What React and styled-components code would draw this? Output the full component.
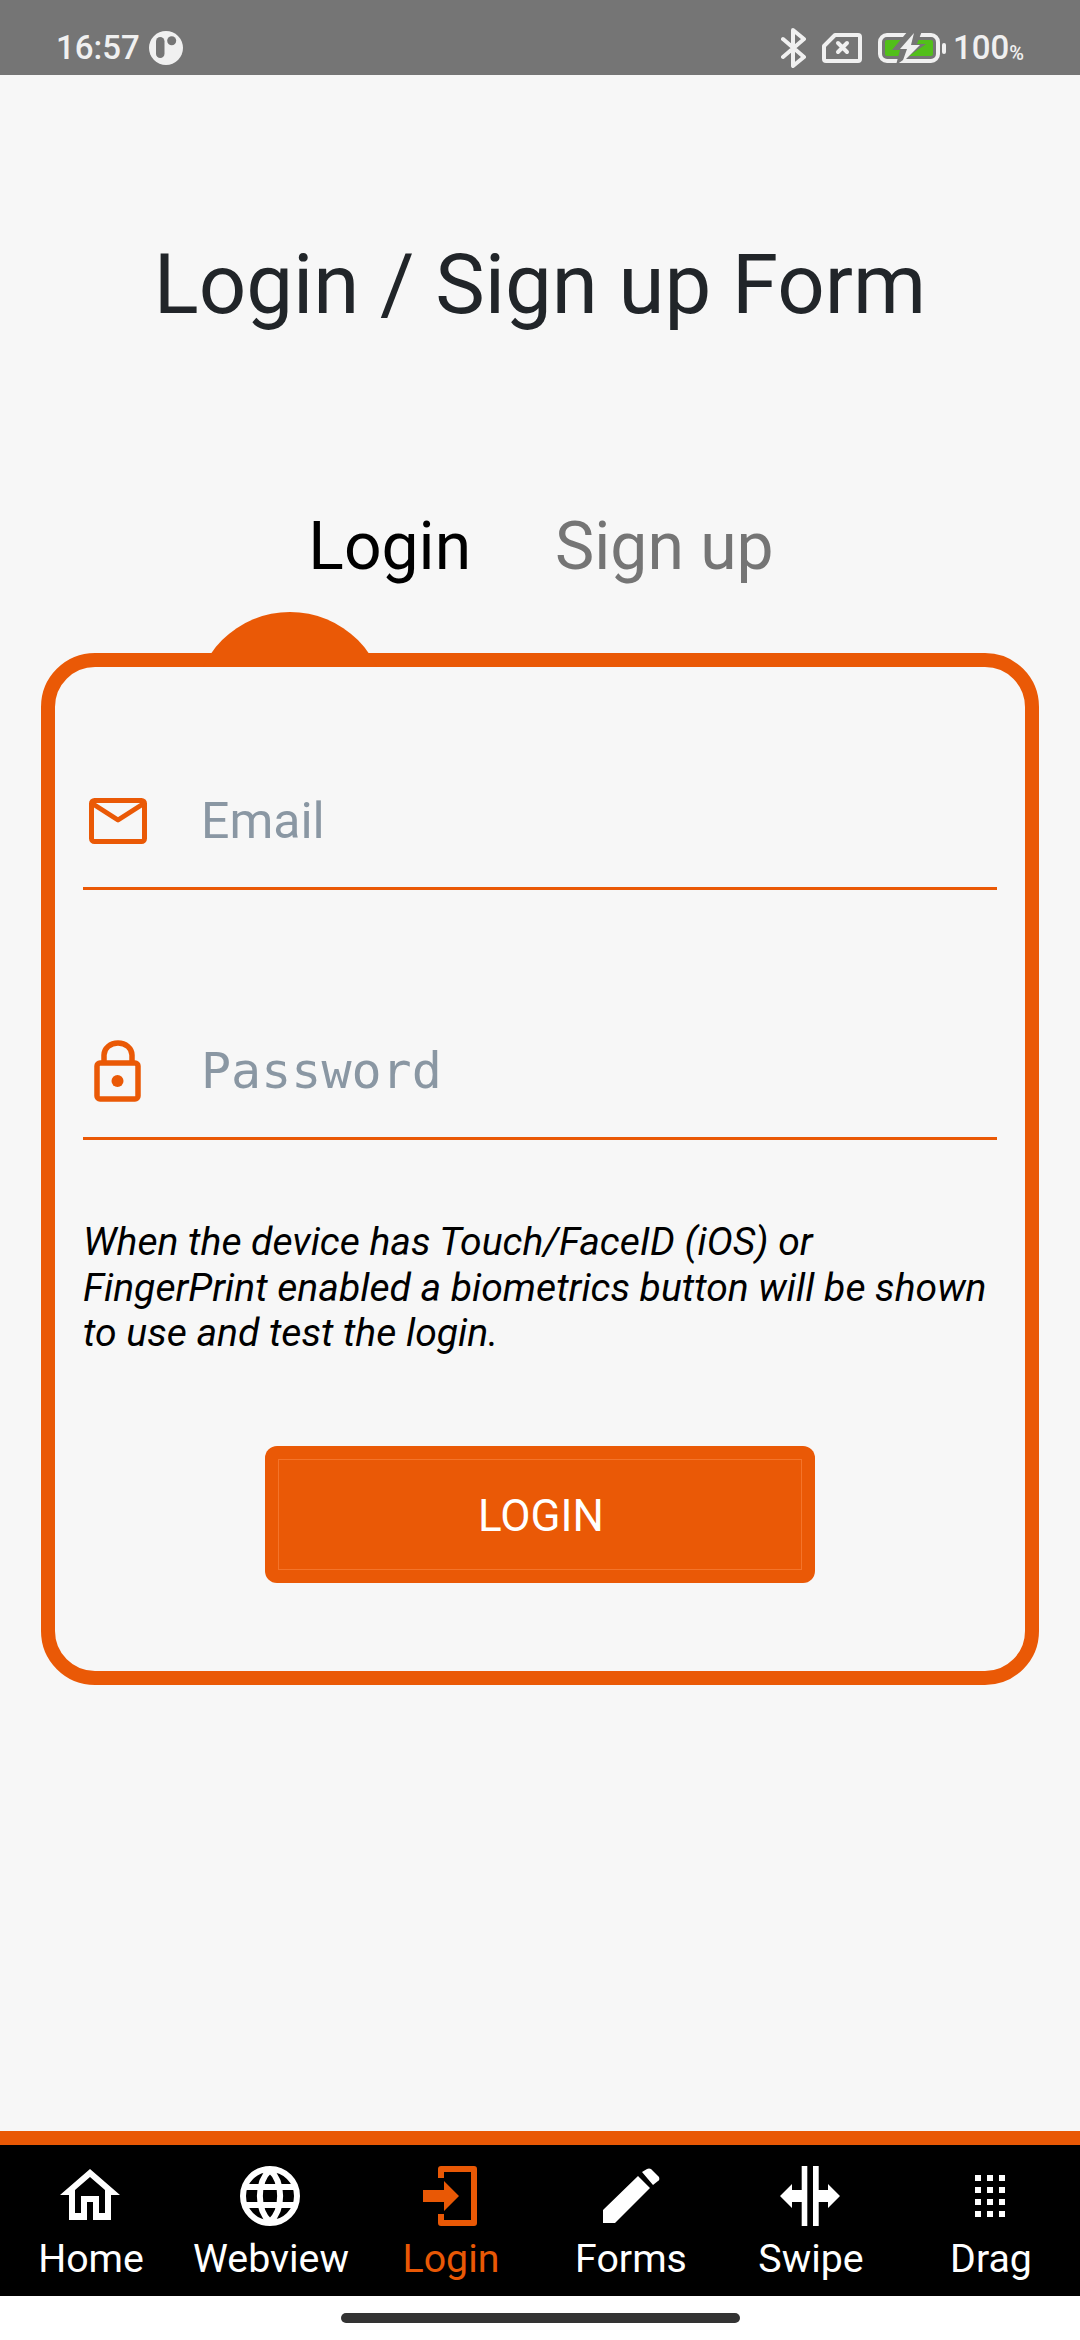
import React from "react";
import styled, { createGlobalStyle } from "styled-components";

const ORANGE = "#ea5906";

const Global = createGlobalStyle`
  html, body { margin: 0; padding: 0; background: #fff; }
  body { font-family: Roboto, "Noto Sans", sans-serif; }
`;

const Screen = styled.div`
  width: 1080px;
  height: 2340px;
  display: flex;
  flex-direction: column;
  overflow: hidden;
  background: #f7f7f7;
`;

const StatusBar = styled.div`
  height: 75px;
  flex: none;
  background: #757575;
  display: flex;
  align-items: center;
  justify-content: space-between;
  padding: 20px 56px 0 56px;
  color: #f0f0f0;
  font-size: 33px;
  font-weight: 500;
  box-sizing: border-box;
`;

const StatusGroup = styled.div`
  display: flex;
  align-items: center;
`;

const Percent = styled.span`
  font-size: 20px;
  align-self: flex-end;
  line-height: 20px;
  margin-bottom: 5px;
`;

const Main = styled.main`
  flex: 1;
  display: flex;
  flex-direction: column;
  align-items: center;
  min-height: 0;
`;

const Title = styled.h1`
  margin: 155px 0 0;
  height: 110px;
  line-height: 110px;
  font-size: 83.4px;
  font-weight: 400;
  color: #212529;
`;

const Tabs = styled.div`
  margin: 162px 0 0 2px;
  display: flex;
  justify-content: center;
  gap: 84px;
  height: 90px;
`;

const Tab = styled.div`
  font-size: 66px;
  line-height: 90px;
  color: ${(p) => (p.$active ? "#000" : "#757575")};
`;

const Card = styled.section`
  position: relative;
  margin-top: 61px;
  box-sizing: border-box;
  width: 998px;
  height: 1032px;
  border: 14px solid ${ORANGE};
  border-radius: 54px;
  padding: 0 28px;
`;

const TabMarker = styled.div`
  position: absolute;
  left: 139px;
  top: -55px;
  width: 192px;
  height: 55px;
  overflow: hidden;
  &::before {
    content: "";
    display: block;
    width: 192px;
    height: 192px;
    border-radius: 50%;
    background: ${ORANGE};
  }
`;

const Field = styled.div`
  display: flex;
  align-items: center;
  height: 80px;
  padding-bottom: 26px;
  margin-top: ${(p) => p.$top}px;
  border-bottom: 3px solid ${ORANGE};
`;

const FieldIcon = styled.div`
  flex: none;
  width: 118px;
  display: flex;
  align-items: center;
  padding-left: 6px;
  box-sizing: border-box;
`;

const Placeholder = styled.div`
  font-size: 50px;
  color: #8a97a3;
  font-family: ${(p) => (p.$mono ? '"DejaVu Sans Mono", monospace' : "Roboto, sans-serif")};
`;

const Note = styled.p`
  margin: 80px 0 0;
  font-size: 39.1px;
  line-height: 45.5px;
  font-style: italic;
  color: #000;
`;

const LoginButton = styled.button`
  display: block;
  width: 550px;
  height: 137px;
  margin: 89px auto 0;
  padding: 13px;
  border: none;
  border-radius: 12px;
  background: ${ORANGE};
  box-sizing: border-box;
`;

const ButtonInner = styled.span`
  display: flex;
  align-items: center;
  justify-content: center;
  height: 100%;
  box-sizing: border-box;
  padding: 4px 0 0 2px;
  border: 1px solid #f4742a;
  color: #fff;
  font-family: Roboto, sans-serif;
  font-size: 44px;
`;

const TabBar = styled.nav`
  flex: none;
  height: 165px;
  box-sizing: border-box;
  border-top: 14px solid #e95805;
  background: #000;
  display: grid;
  grid-template-columns: repeat(6, 180px);
`;

const TabItem = styled.div`
  display: flex;
  flex-direction: column;
  align-items: center;
  padding-top: 21px;
  color: ${(p) => (p.$active ? "#e95805" : "#fff")};
  font-size: 39.3px;
  line-height: 46px;
  gap: 10px;
`;

const TabLabel = styled.span`
  margin-left: 2px;
`;

const TabIcon = styled.svg`
  display: block;
  width: 60px;
  height: 60px;
  flex: none;
`;

const GestureArea = styled.div`
  flex: none;
  height: 44px;
  background: #fff;
  display: flex;
  justify-content: center;
  padding-top: 17px;
  box-sizing: border-box;
`;

const HomeBar = styled.div`
  width: 399px;
  height: 10px;
  border-radius: 5px;
  background: #333;
`;

const HomeIcon = () => (
  <TabIcon viewBox="0 0 60 60">
    <path
      fill="currentColor"
      fillRule="evenodd"
      d="M30 3 60 29H51V54H33V36H27V54H9V29H0ZM30 11 15 24V47H21V30H39V47H45V24Z"
    />
  </TabIcon>
);
const GlobeIcon = () => (
  <TabIcon viewBox="0 0 60 60" fill="none" stroke="currentColor" strokeWidth="6">
    <circle cx="30" cy="30" r="27" />
    <path d="M30 4C16.5 16 16.5 44 30 56M30 4C43.5 16 43.5 44 30 56M5 21H55M5 39H55" />
  </TabIcon>
);
const LoginIcon = () => (
  <TabIcon viewBox="0 0 60 60">
    <path fill="currentColor" d="M3 24H24V15L39 30 24 45V36H3Z" />
    <path fill="none" stroke="currentColor" strokeWidth="6" strokeLinejoin="round" d="M21 12V3H54V57H21V48" />
  </TabIcon>
);
const PencilIcon = () => (
  <TabIcon viewBox="0 0 60 60">
    <path fill="currentColor" d="M3 44 38 10 50 22 15 57H3ZM42 6 47 3Q49 2 51 3L59 11Q60 14 58 15L53 19Z" />
  </TabIcon>
);
const SwipeIcon = () => (
  <TabIcon viewBox="0 0 60 60">
    <path fill="currentColor" d="M21.7 0H27.3V60H21.7ZM33 0H38.7V60H33ZM0 30 12 18V24H21.7V36H12V42ZM60 30 48 18V24H38.7V36H48V42Z" />
  </TabIcon>
);
const DragIcon = () => (
  <TabIcon viewBox="0 0 60 60">
    {[9, 21, 33, 45].flatMap((y) =>
      [15, 27, 39].map((x) => <rect key={`${x}-${y}`} x={x} y={y} width="6" height="6" fill="currentColor" />)
    )}
  </TabIcon>
);

const items = [
  { label: "Home", Icon: HomeIcon },
  { label: "Webview", Icon: GlobeIcon },
  { label: "Login", Icon: LoginIcon, active: true },
  { label: "Forms", Icon: PencilIcon },
  { label: "Swipe", Icon: SwipeIcon },
  { label: "Drag", Icon: DragIcon },
];

const StatusSvg = styled.svg`
  display: block;
  flex: none;
  margin: ${(p) => p.$m || "0"};
`;

const BatteryLevel = styled.span`
  margin-left: 7px;
`;

export default function App() {
  return (
    <Screen>
      <Global />
      <StatusBar>
        <StatusGroup>
          16:57
          <StatusSvg $m="1px 0 0 9px" width="34" height="34" viewBox="0 0 34 34">
            <circle cx="17" cy="17" r="17" fill="#f0f0f0" />
            <rect x="7" y="6" width="8.5" height="21" rx="4.25" fill="#757575" />
            <circle cx="22.7" cy="9.7" r="4.5" fill="#757575" />
          </StatusSvg>
        </StatusGroup>
        <StatusGroup>
          <StatusSvg width="26" height="40" viewBox="0 0 26 40" fill="none" stroke="#f0f0f0" strokeWidth="4" strokeLinecap="round" strokeLinejoin="round">
            <path d="M2 11 23 29 12 38V2L23 11 2 29" />
          </StatusSvg>
          <StatusSvg $m="0 0 0 15px" width="40" height="30" viewBox="0 0 40 30" fill="none" stroke="#f0f0f0" strokeWidth="4" strokeLinejoin="round">
            <path d="M13 2H36Q38 2 38 4V26Q38 28 36 28H4Q2 28 2 26V13Z" />
            <path strokeLinecap="round" d="M16 10 25 19M25 10 16 19" />
          </StatusSvg>
          <StatusSvg $m="0 0 0 16px" width="68" height="30" viewBox="0 0 68 30">
            <rect x="2" y="2" width="58" height="26" rx="7" fill="none" stroke="#f0f0f0" strokeWidth="4" />
            <rect x="7" y="7" width="48" height="16" rx="2" fill="#52bf1a" />
            <path fill="#757575" d="M30 -2 14 17 22 17 18 32 48 11 39 11 44 -2Z" />
            <path fill="#f0f0f0" d="M36 0 22 16 29 16 24 30 42 12 33 12Z" />
            <rect x="64" y="10" width="4" height="11" rx="2" fill="#f0f0f0" />
          </StatusSvg>
          <BatteryLevel>100</BatteryLevel>
          <Percent>%</Percent>
        </StatusGroup>
      </StatusBar>

      <Main>
        <Title>Login / Sign up Form</Title>
        <Tabs>
          <Tab $active>Login</Tab>
          <Tab>Sign up</Tab>
        </Tabs>
        <Card>
          <TabMarker />
          <Field $top={114}>
            <FieldIcon>
              <svg width="58" height="46" viewBox="0 0 58 46" fill="none" stroke={ORANGE} strokeWidth="5" strokeLinejoin="round">
                <rect x="2.5" y="2.5" width="53" height="41" rx="3" />
                <path d="M4 6 29 22 54 6" />
              </svg>
            </FieldIcon>
            <Placeholder>Email</Placeholder>
          </Field>
          <Field $top={141}>
            <FieldIcon>
              <svg style={{ marginLeft: 5 }} width="48" height="62" viewBox="0 0 48 62" fill="none" stroke={ORANGE} strokeWidth="5.5">
                <rect x="3" y="23" width="41" height="36" rx="3" />
                <path d="M10 23V15A14 12 0 0 1 38 15V23" />
                <circle cx="23.5" cy="41" r="6" fill={ORANGE} stroke="none" />
              </svg>
            </FieldIcon>
            <Placeholder $mono>Password</Placeholder>
          </Field>
          <Note>When the device has Touch/FaceID (iOS) or FingerPrint enabled a biometrics button will be shown to use and test the login.</Note>
          <LoginButton>
            <ButtonInner>LOGIN</ButtonInner>
          </LoginButton>
        </Card>
      </Main>

      <TabBar>
        {items.map(({ label, Icon, active }) => (
          <TabItem key={label} $active={active}>
            <Icon />
            <TabLabel>{label}</TabLabel>
          </TabItem>
        ))}
      </TabBar>
      <GestureArea>
        <HomeBar />
      </GestureArea>
    </Screen>
  );
}
